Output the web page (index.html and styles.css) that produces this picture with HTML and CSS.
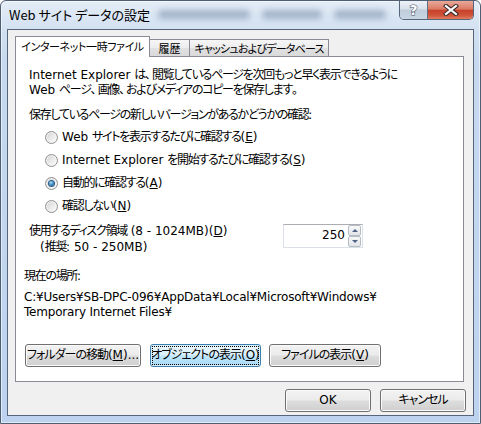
FILE: index.html
```html
<!DOCTYPE html>
<html lang="ja">
<head>
    <meta charset="UTF-8">
    <title>Web サイト データの設定</title>
    <link rel="stylesheet" href="styles.css">
</head>
<body>
    <div class="window">
        <div class="titlebar">
            <span class="title">Web サイト データの設定</span>
            <div class="glass-blur">
                <span class="blob b1"></span>
                <span class="blob b2"></span>
                <span class="blob b3"></span>
            </div>
            <div class="caption-btns">
                <div class="cap-help">?</div>
                <div class="cap-close">
                    <svg width="16" height="12" viewBox="0 0 16 12">
                        <path d="M3 2 L13 10 M13 2 L3 10" stroke="#3a2a28" stroke-width="4.2" stroke-linecap="square"/>
                        <path d="M3 2 L13 10 M13 2 L3 10" stroke="#fff" stroke-width="2.2" stroke-linecap="square"/>
                    </svg>
                </div>
            </div>
        </div>

        <div class="client">
            <div class="tabs">
                <div class="tab tab-active tab-files">インターネット一時ファイル</div>
                <div class="tab tab-history">履歴</div>
                <div class="tab tab-cache">キャッシュおよびデータベース</div>
            </div>

            <div class="panel">
                <p class="intro"><span class="lat">Internet Explorer </span>は<span class="punct">、</span>閲覧しているページを次回もっと早く表示できるように<br><span class="lat">Web </span>ページ<span class="punct">、</span>画像<span class="punct">、</span>およびメディアのコピーを保存します<span class="punct">。</span></p>
                <p class="check-label">保存しているページの新しいバージョンがあるかどうかの確認<span class="lat">:</span></p>

                <ul class="radios">
                    <li><span class="radio"></span><span><span class="lat">Web </span>サイトを表示するたびに確認する<span class="lat">(<u>E</u>)</span></span></li>
                    <li><span class="radio"></span><span><span class="lat">Internet Explorer </span>を開始するたびに確認する<span class="lat">(<u>S</u>)</span></span></li>
                    <li><span class="radio radio-on"></span><span>自動的に確認する<span class="lat">(<u>A</u>)</span></span></li>
                    <li><span class="radio"></span><span>確認しない<span class="lat">(<u>N</u>)</span></span></li>
                </ul>

                <div class="disk">
                    <div class="disk-label">
                        <div>使用するディスク領域<span class="lat"> (8 - 1024MB)(<u>D</u>)</span></div>
                        <div class="disk-hint"><span class="lat">(</span>推奨<span class="lat">: 50 - 250MB)</span></div>
                    </div>
                    <div class="spin">
                        <span class="spin-value lat">250</span>
                        <div class="spin-btns">
                            <div class="spin-btn"><span class="arrow-up"></span></div>
                            <div class="spin-btn"><span class="arrow-down"></span></div>
                        </div>
                    </div>
                </div>

                <p class="loc-label">現在の場所<span class="lat">:</span></p>
                <p class="path lat">C:¥Users¥SB-DPC-096¥AppData¥Local¥Microsoft¥Windows¥<br>Temporary Internet Files¥</p>

                <div class="btn-row">
                    <div class="btn btn-move">フォルダーの移動<span class="lat">(<u>M</u>)...</span></div>
                    <div class="btn btn-focus btn-objects"><span class="focus-rect">オブジェクトの表示<span class="lat">(<u>O</u>)</span></span></div>
                    <div class="btn btn-files">ファイルの表示<span class="lat">(<u>V</u>)</span></div>
                </div>
            </div>

            <div class="footer">
                <div class="btn btn-dlg"><span class="lat">OK</span></div>
                <div class="btn btn-dlg">キャンセル</div>
            </div>
        </div>
    </div>
</body>
</html>
```

FILE: styles.css
```css
body {
    margin: 0;
    font-family: "DejaVu Sans", "Noto Sans CJK JP", sans-serif;
    font-size: 12px;
    color: #000;
    text-autospace: no-autospace;
}

p, ul {
    margin: 0;
    padding: 0;
}

u {
    text-decoration-thickness: 1px;
    text-underline-offset: 1px;
}

/* latin runs keep their natural width, kana/kanji are tightened */
.lat {
    letter-spacing: 0;
}

.punct {
    letter-spacing: 1px;
}

/* window frame */
.window {
    width: 481px;
    height: 424px;
    box-sizing: border-box;
    border: 1px solid #4f5f73;
    border-radius: 6px 6px 0 0;
    padding: 0 6px 7px 6px;
    display: flex;
    flex-direction: column;
    background: linear-gradient(to bottom, #e4edf7 0px, #d3e1f1 28px, #c6d9ef 60px, #bcd2ee 100%);
    box-shadow: inset 0 0 0 1px rgba(255, 255, 255, 0.55);
}

.titlebar {
    height: 28px;
    display: flex;
    align-items: flex-start;
    padding-left: 2px;
}

.title {
    font-family: "Noto Sans CJK JP", sans-serif;
    font-feature-settings: "palt";
    font-size: 13px;
    line-height: 18px;
    margin-top: 5px;
    color: #000;
    white-space: nowrap;
}

.glass-blur {
    display: flex;
    gap: 12px;
    margin-top: 9px;
    margin-left: 8px;
}

.blob {
    display: block;
    height: 9px;
    border-radius: 4px;
    background: #6a7f9e;
    opacity: 0.5;
    filter: blur(3px);
}
.b1 { width: 92px; }
.b2 { width: 60px; }
.b3 { width: 52px; }

.caption-btns {
    margin-left: auto;
    display: flex;
    height: 19px;
    border: 1px solid #56657c;
    border-top: none;
    border-radius: 0 0 5px 5px;
    overflow: hidden;
    box-sizing: border-box;
}

.cap-help {
    width: 27px;
    border-right: 1px solid #5e6f86;
    background: linear-gradient(to bottom, #eef2f7 0%, #d7e0ea 45%, #bfcbd8 50%, #cad6e3 100%);
    color: #fff;
    font-family: "DejaVu Sans", sans-serif;
    font-weight: bold;
    font-size: 14px;
    line-height: 18px;
    text-align: center;
    -webkit-text-stroke: 1px #39495d;
    paint-order: stroke fill;
}

.cap-close {
    width: 45px;
    display: flex;
    align-items: center;
    justify-content: center;
    background: linear-gradient(to bottom, #e9a99b 0%, #dc7a63 45%, #c7402a 52%, #d0553a 80%, #e27e60 100%);
}

/* client area */
.client {
    flex: 1;
    border: 1px solid #56657a;
    background: #f0f0f0;
    padding: 6px 0 0 7px;
    display: flex;
    flex-direction: column;
}

.tabs {
    display: flex;
    align-items: flex-end;
    height: 20px;
}

.tab {
    box-sizing: border-box;
    height: 17px;
    border: 1px solid #898c95;
    border-bottom: none;
    font-family: "Noto Sans CJK JP", sans-serif;
    font-feature-settings: "palt";
    font-size: 11px;
    line-height: 16px;
    text-align: center;
    white-space: nowrap;
    overflow: hidden;
    background: linear-gradient(to bottom, #f6f6f6 0%, #ececec 50%, #e1e1e1 50%, #dadada 100%);
}

.tab-history { border-left: none; width: 40px; }
.tab-cache { border-left: none; width: 139px; letter-spacing: -0.8px; }

.tab-active {
    width: 135px;
    height: 21px;
    margin-bottom: -1px;
    line-height: 19px;
    letter-spacing: -0.4px;
    background: #fff;
    position: relative;
    z-index: 1;
}

.panel {
    width: 449px;
    height: 326px;
    box-sizing: border-box;
    border: 1px solid #898c95;
    background: #fff;
    padding: 11px 0 0 8px;
    line-height: 15px;
    letter-spacing: -1.3px;
    font-feature-settings: "palt";
}

.intro,
.check-label {
    margin-left: 5px;
    white-space: nowrap;
}

.check-label {
    margin-top: 10px;
}

.radios {
    list-style: none;
    margin: 3px 0 0 21px;
}

.radios li {
    height: 23px;
    display: flex;
    align-items: center;
    gap: 4px;
    white-space: nowrap;
}

.radio {
    width: 13px;
    height: 13px;
    flex: none;
    box-sizing: border-box;
    border-radius: 50%;
    border: 1px solid #8f8f8f;
    background: linear-gradient(135deg, #cfcfcf 0%, #ececec 55%, #fdfdfd 100%);
    box-shadow: inset 0 0 0 1px #f3f3f3;
    display: flex;
    align-items: center;
    justify-content: center;
}

.radio-on::after {
    content: "";
    width: 5px;
    height: 5px;
    border-radius: 50%;
    background: radial-gradient(circle at 40% 35%, #b9e3fb 0%, #3c8cc4 45%, #17476f 100%);
    box-shadow: 0 0 0 1px #2a5e8a;
}

.disk {
    display: flex;
    margin-top: 5px;
    line-height: 16px;
}

.disk-label {
    width: 254px;
    margin-left: 5px;
    white-space: nowrap;
}

.disk-hint {
    padding-left: 11px;
}

.spin {
    width: 80px;
    height: 24px;
    box-sizing: border-box;
    margin-top: 1px;
    border: 1px solid #dbdfe6;
    border-top-color: #abadb3;
    display: flex;
    align-items: center;
    padding-right: 1px;
}

.spin-value {
    flex: 1;
    text-align: right;
    padding-right: 3px;
    line-height: 16px;
    margin-top: -2px;
}

.spin-btns {
    width: 13px;
    height: 22px;
    display: flex;
    flex-direction: column;
}

.spin-btn {
    flex: 1;
    box-sizing: border-box;
    border: 1px solid #b4bcc6;
    border-radius: 2px;
    background: linear-gradient(to bottom, #f8f8f8, #e2e4e7);
    display: flex;
    align-items: center;
    justify-content: center;
}

.arrow-up,
.arrow-down {
    width: 0;
    height: 0;
    border-left: 3px solid transparent;
    border-right: 3px solid transparent;
}
.arrow-up { border-bottom: 3px solid #4d6185; }
.arrow-down { border-top: 3px solid #4d6185; }

.loc-label {
    margin-top: 14px;
}

.path {
    margin-top: 6px;
    white-space: nowrap;
    letter-spacing: -0.2px;
}

/* buttons */
.btn-row {
    display: flex;
    margin-top: 24px;
    margin-left: 1px;
}

.btn {
    height: 23px;
    box-sizing: border-box;
    border: 1px solid #707070;
    border-radius: 3px;
    background: linear-gradient(to bottom, #f2f2f2 0%, #ebebeb 48%, #dddddd 52%, #cfcfcf 100%);
    box-shadow: inset 0 0 0 1px #fbfbfb;
    display: flex;
    align-items: center;
    justify-content: center;
    line-height: 15px;
    white-space: nowrap;
    letter-spacing: -1px;
    font-feature-settings: "palt";
}

.btn-move { width: 116px; }
.btn-objects { width: 111px; margin-left: 9px; }
.btn-files { width: 112px; margin-left: 8px; }

.btn-focus {
    border-color: #3c7fb1;
    background: linear-gradient(to bottom, #eaf6fd 0%, #d9f0fc 48%, #bee6fd 52%, #a7d9f5 100%);
    box-shadow: inset 0 0 0 1px #d8eefa;
}

.focus-rect {
    box-sizing: border-box;
    height: 17px;
    width: 105px;
    outline: 1px dotted #000;
    display: flex;
    align-items: center;
    justify-content: center;
}

.footer {
    display: flex;
    justify-content: flex-end;
    gap: 9px;
    margin-top: 7px;
    padding-right: 7px;
}

.btn-dlg {
    width: 86px;
}
```
